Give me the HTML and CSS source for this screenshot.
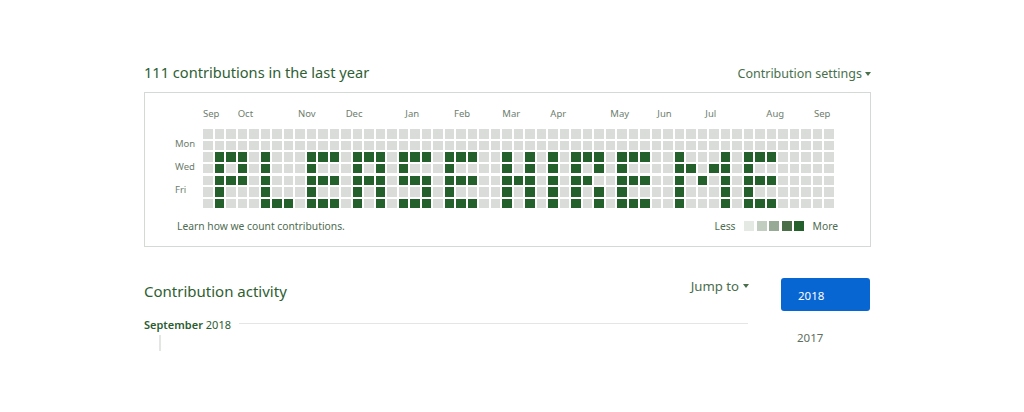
FILE: index.html
```html
<!DOCTYPE html>
<html lang="en">
<head>
<meta charset="utf-8">
<title>Contributions</title>
<link rel="stylesheet" href="styles.css">
</head>
<body>
<div class="page">
  <div class="graph-head">
    <h2 class="graph-title">111 contributions in the last year</h2>
    <div class="settings">Contribution settings <span class="caret"></span></div>
  </div>
  <div class="graph-box">
    <div class="calendar">
      <div class="months">
        <span class="month" style="width:34.7px">Sep</span>
        <span class="month" style="width:60.3px">Oct</span>
        <span class="month" style="width:47.7px">Nov</span>
        <span class="month" style="width:59.7px">Dec</span>
        <span class="month" style="width:48.6px">Jan</span>
        <span class="month" style="width:48.4px">Feb</span>
        <span class="month" style="width:48px">Mar</span>
        <span class="month" style="width:60px">Apr</span>
        <span class="month" style="width:47px">May</span>
        <span class="month" style="width:48px">Jun</span>
        <span class="month" style="width:61px">Jul</span>
        <span class="month" style="width:47.6px">Aug</span>
        <span class="month">Sep</span>
      </div>
      <div class="days">
        <span class="day"></span>
        <span class="day">Mon</span>
        <span class="day"></span>
        <span class="day">Wed</span>
        <span class="day"></span>
        <span class="day">Fri</span>
        <span class="day"></span>
      </div>
      <div class="cells">
<i></i><i></i><i></i><i></i><i></i><i></i><i></i>
<i></i><i></i><i class="g"></i><i class="g"></i><i class="g"></i><i class="g"></i><i class="g"></i>
<i></i><i></i><i class="g"></i><i></i><i class="g"></i><i></i><i></i>
<i></i><i></i><i class="g"></i><i class="g"></i><i class="g"></i><i></i><i></i>
<i></i><i></i><i></i><i></i><i></i><i></i><i></i>
<i></i><i></i><i class="g"></i><i class="g"></i><i class="g"></i><i class="g"></i><i class="g"></i>
<i></i><i></i><i></i><i></i><i></i><i></i><i class="g"></i>
<i></i><i></i><i></i><i></i><i></i><i></i><i class="g"></i>
<i></i><i></i><i></i><i></i><i></i><i></i><i></i>
<i></i><i></i><i class="g"></i><i class="g"></i><i class="g"></i><i class="g"></i><i class="g"></i>
<i></i><i></i><i class="g"></i><i></i><i class="g"></i><i></i><i class="g"></i>
<i></i><i></i><i class="g"></i><i></i><i class="g"></i><i></i><i class="g"></i>
<i></i><i></i><i></i><i></i><i></i><i></i><i></i>
<i></i><i></i><i class="g"></i><i class="g"></i><i class="g"></i><i class="g"></i><i class="g"></i>
<i></i><i></i><i class="g"></i><i></i><i class="g"></i><i></i><i></i>
<i></i><i></i><i class="g"></i><i class="g"></i><i class="g"></i><i class="g"></i><i class="g"></i>
<i></i><i></i><i></i><i></i><i></i><i></i><i></i>
<i></i><i></i><i class="g"></i><i class="g"></i><i class="g"></i><i></i><i class="g"></i>
<i></i><i></i><i class="g"></i><i></i><i class="g"></i><i></i><i class="g"></i>
<i></i><i></i><i class="g"></i><i></i><i class="g"></i><i class="g"></i><i class="g"></i>
<i></i><i></i><i></i><i></i><i></i><i></i><i></i>
<i></i><i></i><i class="g"></i><i class="g"></i><i class="g"></i><i class="g"></i><i class="g"></i>
<i></i><i></i><i class="g"></i><i></i><i class="g"></i><i></i><i class="g"></i>
<i></i><i></i><i class="g"></i><i></i><i class="g"></i><i></i><i class="g"></i>
<i></i><i></i><i></i><i></i><i></i><i></i><i></i>
<i></i><i></i><i></i><i></i><i></i><i></i><i></i>
<i></i><i></i><i class="g"></i><i class="g"></i><i class="g"></i><i class="g"></i><i class="g"></i>
<i></i><i></i><i></i><i></i><i class="g"></i><i></i><i></i>
<i></i><i></i><i class="g"></i><i class="g"></i><i class="g"></i><i class="g"></i><i class="g"></i>
<i></i><i></i><i></i><i></i><i></i><i></i><i></i>
<i></i><i></i><i class="g"></i><i class="g"></i><i class="g"></i><i class="g"></i><i class="g"></i>
<i></i><i></i><i></i><i></i><i></i><i></i><i></i>
<i></i><i></i><i class="g"></i><i class="g"></i><i class="g"></i><i class="g"></i><i class="g"></i>
<i></i><i></i><i class="g"></i><i></i><i class="g"></i><i></i><i></i>
<i></i><i></i><i class="g"></i><i class="g"></i><i></i><i class="g"></i><i class="g"></i>
<i></i><i></i><i></i><i></i><i></i><i></i><i></i>
<i></i><i></i><i class="g"></i><i class="g"></i><i class="g"></i><i class="g"></i><i class="g"></i>
<i></i><i></i><i class="g"></i><i></i><i class="g"></i><i></i><i class="g"></i>
<i></i><i></i><i class="g"></i><i></i><i class="g"></i><i></i><i class="g"></i>
<i></i><i></i><i></i><i></i><i></i><i></i><i></i>
<i></i><i></i><i></i><i></i><i></i><i></i><i></i>
<i></i><i></i><i class="g"></i><i class="g"></i><i class="g"></i><i class="g"></i><i class="g"></i>
<i></i><i></i><i></i><i class="g"></i><i></i><i></i><i></i>
<i></i><i></i><i></i><i></i><i class="g"></i><i></i><i></i>
<i></i><i></i><i></i><i class="g"></i><i></i><i></i><i></i>
<i></i><i></i><i class="g"></i><i class="g"></i><i class="g"></i><i class="g"></i><i class="g"></i>
<i></i><i></i><i></i><i></i><i></i><i></i><i></i>
<i></i><i></i><i class="g"></i><i class="g"></i><i class="g"></i><i class="g"></i><i class="g"></i>
<i></i><i></i><i class="g"></i><i></i><i class="g"></i><i></i><i class="g"></i>
<i></i><i></i><i class="g"></i><i></i><i class="g"></i><i></i><i class="g"></i>
<i></i><i></i><i></i><i></i><i></i><i></i><i></i>
<i></i><i></i><i></i><i></i><i></i><i></i><i></i>
<i></i><i></i><i></i><i></i><i></i><i></i><i></i>
<i></i><i></i><i></i><i></i><i></i><i></i><i></i>
<i></i><i></i><i></i><i></i><i></i><i></i><i></i>
      </div>
    </div>
    <div class="graph-foot">
      <a class="learn" href="#">Learn how we count contributions.</a>
      <div class="legend">
        <span class="legend-label">Less</span>
        <span class="sq l0"></span><span class="sq l1"></span><span class="sq l2"></span><span class="sq l3"></span><span class="sq l4"></span>
        <span class="legend-label">More</span>
      </div>
    </div>
  </div>

  <div class="activity">
    <div class="activity-main">
      <div class="activity-head">
        <h3 class="activity-title">Contribution activity</h3>
        <div class="jump">Jump to <span class="caret"></span></div>
      </div>
      <div class="month-row">
        <span class="month-name"><b>September</b> 2018</span>
        <span class="month-rule"></span>
      </div>
      <div class="timeline"></div>
    </div>
    <div class="years">
      <a class="year active" href="#">2018</a>
      <a class="year" href="#">2017</a>
    </div>
  </div>
</div>
</body>
</html>
```

FILE: styles.css
```css
* { box-sizing: border-box; }
html, body { margin: 0; padding: 0; background: #fff; }
body {
  font-family: "Noto Sans", "Open Sans", Arial, sans-serif;
  color: #2c5d31;
}
a { text-decoration: none; color: inherit; }

.page {
  width: 727px;
  margin-left: 144px;
  padding-top: 62px;
}

.graph-head {
  display: flex;
  justify-content: space-between;
  align-items: flex-end;
  height: 20px;
  margin-bottom: 10px;
}
.graph-title {
  margin: 0;
  font-size: 14.6px;
  font-weight: 400;
  line-height: 20px;
  color: #2e6033;
}
.settings {
  font-size: 12.5px;
  line-height: 16px;
  color: #48704b;
  display: flex;
  align-items: center;
  gap: 3px;
}
.caret {
  display: inline-block;
  width: 0;
  height: 0;
  border-left: 3.5px solid transparent;
  border-right: 3.5px solid transparent;
  border-top: 4px solid currentColor;
}

.graph-box {
  border: 1px solid #d5d9d5;
  height: 155px;
  padding: 14px 32px 0 30px;
}
.calendar {
  display: grid;
  grid-template-columns: 28px auto;
  grid-template-rows: 13px auto;
  row-gap: 9px;
}
.months {
  grid-column: 2;
  grid-row: 1;
  display: flex;
  font-size: 9.5px;
  line-height: 13px;
  color: #6d7d6e;
  white-space: nowrap;
}
.month { flex: none; }
.days {
  grid-column: 1;
  grid-row: 2;
  display: grid;
  grid-template-rows: repeat(7, 9.5px);
  row-gap: 2.17px;
  font-size: 9.5px;
  color: #6d7d6e;
}
.day { line-height: 9.5px; margin-top: -2px; white-space: nowrap; }
.cells {
  grid-column: 2;
  grid-row: 2;
  display: grid;
  grid-auto-flow: column;
  grid-template-rows: repeat(7, 9.5px);
  grid-auto-columns: 9.5px;
  column-gap: 2px;
  row-gap: 2.17px;
}
.cells i { display: block; background: #dadcda; }
.cells i.g { background: #23602b; }

.graph-foot {
  display: flex;
  justify-content: space-between;
  align-items: center;
  margin-top: 11px;
  padding-left: 2px;
  font-size: 10.3px;
  line-height: 14px;
  color: #4f6c52;
}
.legend {
  display: flex;
  align-items: center;
  gap: 2.5px;
}
.legend-label { margin: 0 6px; }
.legend-label:first-child { margin-left: 0; }
.legend-label:last-child { margin-right: 0; }
.sq { display: block; width: 10px; height: 10px; }
.l0 { background: #e4e9e4; }
.l1 { background: #c0cdbf; }
.l2 { background: #97aa96; }
.l3 { background: #4b6f48; }
.l4 { background: #23602b; }

.activity {
  display: flex;
  gap: 31px;
  margin-top: 31px;
}
.activity-main { width: 606px; }
.activity-head {
  display: flex;
  justify-content: space-between;
  align-items: flex-start;
}
.activity-title {
  margin: 0;
  padding-top: 3px;
  font-size: 15px;
  font-weight: 400;
  line-height: 20px;
  color: #2e6033;
}
.jump {
  font-size: 13.2px;
  line-height: 16px;
  color: #4a6d4d;
  display: flex;
  align-items: center;
  gap: 4px;
  margin-right: 1px;
}
.month-row {
  display: flex;
  align-items: center;
  margin-top: 15px;
  height: 16px;
}
.month-name {
  font-size: 11px;
  color: #2c5d31;
  white-space: nowrap;
}
.month-name b { font-weight: 600; }
.month-rule {
  flex: 1;
  height: 1px;
  background: #e3e6e3;
  margin-left: 8px;
  margin-right: 2px;
  margin-top: -2px;
}
.timeline {
  width: 2px;
  height: 16px;
  margin-left: 15px;
  margin-top: 3px;
  background: #e3e6e3;
}

.years {
  width: 89px;
  display: flex;
  flex-direction: column;
}
.year {
  display: block;
  font-size: 11.5px;
  line-height: 20px;
  padding-left: 16px;
  color: #5e6f5f;
}
.year.active {
  height: 33px;
  line-height: 35px;
  background: #0866d2;
  color: #fff;
  border-radius: 3px;
  padding-left: 17px;
}
.year + .year { margin-top: 17px; }
```
